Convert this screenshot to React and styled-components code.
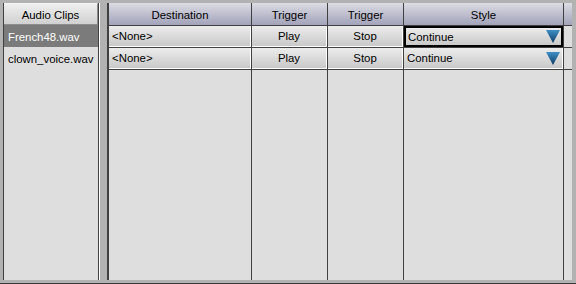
import React from "react";
import styled, { createGlobalStyle } from "styled-components";

const GlobalStyle = createGlobalStyle`
  * { box-sizing: border-box; }
  body { margin: 0; background: #b2b2b2; }
`;

const Frame = styled.div`
  width: 576px;
  height: 284px;
  display: flex;
  padding: 3px 4px 3px 3px;
  background: #b2b2b2;
  border-bottom: 1px solid #3c3c3c;
  font-family: "Liberation Sans", Arial, sans-serif;
  font-size: 11.4px;
  color: #000;
`;

const LeftPanel = styled.div`
  width: 96px;
  display: flex;
  flex-direction: column;
  background: #dedede;
  border-left: 1px solid #404040;
  border-right: 1px solid #404040;
`;

const ListHeader = styled.div`
  height: 22px;
  flex: none;
  display: flex;
  align-items: center;
  justify-content: center;
  padding-top: 1px;
  background: linear-gradient(#eeeeee, #d0d0d0);
  border-top: 1px solid #f4f4f4;
  border-bottom: 1px solid #8c8c8c;
  border-right: 1px solid #8c8c8c;
`;

const ListItem = styled.div`
  height: 22px;
  display: flex;
  align-items: center;
  padding-left: 4px;
  padding-top: 1px;
  white-space: nowrap;
  background: ${(p) => (p.$selected ? "#7b7b7b" : "transparent")};
  color: ${(p) => (p.$selected ? "#ffffff" : "#000000")};
`;

const Splitter = styled.div`
  width: 8px;
  flex: none;
  border-left: 1px solid #ffffff;
  background: #b2b2b2;
`;

const RightPanel = styled.div`
  flex: 1;
  display: grid;
  grid-template-columns: 142px 75px 75px 159px 1fr;
  grid-template-rows: 22px 21px 21px 1fr;
  gap: 1px;
  background: #404040;
  border-left: 2px solid #404040;
`;

const HeadCell = styled.div`
  display: flex;
  align-items: center;
  justify-content: center;
  padding-top: 1px;
  background: linear-gradient(#dcdce4, #a2a2ba);
`;

const Cell = styled.div`
  display: flex;
  align-items: center;
  justify-content: ${(p) => (p.$center ? "center" : "flex-start")};
  padding-left: ${(p) => (p.$center ? "0" : "3px")};
  background: linear-gradient(#ececec, #c9c9c9);
  border-right: 1px solid #ffffff;
  border-bottom: 1px solid #ffffff;
  white-space: nowrap;
`;

const StyleCell = styled(Cell)`
  justify-content: space-between;
  padding-right: ${(p) => (p.$focused ? "1px" : "2px")};
  padding-left: ${(p) => (p.$focused ? "2px" : "3px")};
  border: ${(p) => (p.$focused ? "2px solid #000" : undefined)};
`;

const EmptyCell = styled.div`
  background: #dedede;
`;

const Arrow = () => (
  <svg width="14" height="13" viewBox="0 0 14 13">
    <defs>
      <linearGradient id="ag" x1="0" y1="0" x2="0" y2="1">
        <stop offset="0" stopColor="#3f8fc6" />
        <stop offset="1" stopColor="#0f3c64" />
      </linearGradient>
    </defs>
    <polygon points="0,0 14,0 7,13" fill="url(#ag)" />
  </svg>
);

const rows = [
  { dest: "<None>", a: "Play", b: "Stop", style: "Continue", focused: true },
  { dest: "<None>", a: "Play", b: "Stop", style: "Continue", focused: false },
];

export default function App() {
  return (
    <>
      <GlobalStyle />
      <Frame>
        <LeftPanel>
          <ListHeader>Audio Clips</ListHeader>
          <ListItem $selected>French48.wav</ListItem>
          <ListItem>clown_voice.wav</ListItem>
        </LeftPanel>
        <Splitter />
        <RightPanel>
          <HeadCell>Destination</HeadCell>
          <HeadCell>Trigger</HeadCell>
          <HeadCell>Trigger</HeadCell>
          <HeadCell>Style</HeadCell>
          <HeadCell />
          {rows.map((r, i) => (
            <React.Fragment key={i}>
              <Cell>{r.dest}</Cell>
              <Cell $center>{r.a}</Cell>
              <Cell $center>{r.b}</Cell>
              <StyleCell $focused={r.focused}>
                <span>{r.style}</span>
                <Arrow />
              </StyleCell>
              <EmptyCell />
            </React.Fragment>
          ))}
          <EmptyCell />
          <EmptyCell />
          <EmptyCell />
          <EmptyCell />
          <EmptyCell />
        </RightPanel>
      </Frame>
    </>
  );
}
